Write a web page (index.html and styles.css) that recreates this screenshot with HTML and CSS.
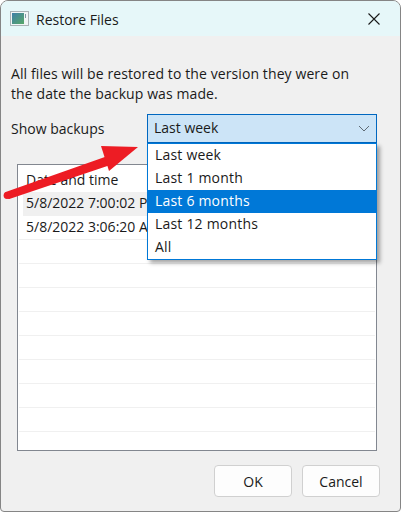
FILE: index.html
```html
<!DOCTYPE html>
<html lang="en">
<head>
  <meta charset="UTF-8" />
  <title>Restore Files</title>
  <link rel="stylesheet" href="styles.css">
</head>
<body>
  <div class="window">
    <div class="titlebar">
      <svg class="app-icon" width="19" height="15" viewBox="0 0 19 15">
        <defs>
          <linearGradient id="iconFill" x1="0" y1="0" x2="1" y2="1">
            <stop offset="0" stop-color="#3f7fa8"/>
            <stop offset="1" stop-color="#58a868"/>
          </linearGradient>
        </defs>
        <rect x="0.5" y="0.5" width="18" height="14" fill="#f2f5f6" stroke="#aab2b6"/>
        <rect x="2" y="2" width="12" height="11" fill="url(#iconFill)"/>
        <rect x="15" y="3" width="1" height="4" fill="#7f98a4"/>
      </svg>
      <span class="title">Restore Files</span>
      <svg class="close" width="12" height="12" viewBox="0 0 12 12">
        <path d="M0.5 0.5L11.5 11.5M11.5 0.5L0.5 11.5" stroke="#1a1a1a" stroke-width="1.1" fill="none"/>
      </svg>
    </div>

    <div class="content">
      <p class="intro">All files will be restored to the version they were on the date the backup was made.</p>

      <div class="filter">
        <label>Show backups</label>
        <div class="combo">
          <span class="combo-value">Last week</span>
          <svg width="12" height="7" viewBox="0 0 12 7">
            <path d="M1 1L6 6L11 1" stroke="#5f6b75" stroke-width="1" fill="none"/>
          </svg>
          <ul class="dropdown">
            <li>Last week</li>
            <li>Last 1 month</li>
            <li class="active">Last 6 months</li>
            <li>Last 12 months</li>
            <li>All</li>
          </ul>
        </div>
      </div>

      <div class="table">
        <div class="thead">Date and time</div>
        <div class="row selected">5/8/2022 7:00:02 PM</div>
        <div class="row">5/8/2022 3:06:20 AM</div>
        <div class="row"></div>
        <div class="row"></div>
        <div class="row"></div>
        <div class="row"></div>
        <div class="row"></div>
        <div class="row"></div>
        <div class="row"></div>
        <div class="row"></div>
      </div>

      <div class="buttons">
        <button>OK</button>
        <button>Cancel</button>
      </div>
    </div>

    <svg class="arrow" width="150" height="70" viewBox="0 0 150 70">
      <polygon points="6,63 108,27 113,33 9,68" fill="#ed1c24" stroke="#ed1c24" stroke-width="2" stroke-linejoin="round"/>
      <circle cx="7" cy="65.5" r="3.4" fill="#ed1c24"/>
      <polygon points="101,16 138,17 109,41" fill="#ed1c24"/>
    </svg>
  </div>
</body>
</html>
```

FILE: styles.css
```css
* {
  box-sizing: border-box;
  margin: 0;
  padding: 0;
}
body {
  background: #ffffff;
  font-family: "Open Sans", sans-serif;
  font-size: 14px;
  color: #1a1a1a;
}
.window {
  position: relative;
  width: 401px;
  height: 512px;
  background: #f0f0f0;
  border: 1px solid #858585;
  border-radius: 8px 8px 4px 4px;
  overflow: hidden;
  display: flex;
  flex-direction: column;
}
.titlebar {
  height: 36px;
  background: #e6f7f9;
  display: flex;
  align-items: center;
  padding: 0 20px 0 9px;
}
.app-icon {
  margin-right: 7px;
}
.title {
  flex: 1;
  font-size: 14px;
  padding-top: 2px;
}
.content {
  flex: 1;
  display: flex;
  flex-direction: column;
  padding: 0 20px 14px 10px;
}
.intro {
  margin-top: 28px;
  line-height: 20px;
  width: 345px;
  letter-spacing: 0.1px;
}
.filter {
  margin-top: 10px;
  display: flex;
  align-items: center;
  justify-content: space-between;
  padding-right: 3px;
}
.combo {
  position: relative;
  width: 230px;
  height: 29px;
  background: #cce4f7;
  border: 1px solid #0067c0;
  display: flex;
  align-items: center;
  justify-content: space-between;
  padding: 0 6px 0 6px;
}
.combo-value {
  margin-top: -3px;
}
.dropdown {
  position: absolute;
  top: 28px;
  left: -1px;
  width: 230px;
  height: 117px;
  background: #ffffff;
  border: 1px solid #0078d7;
  list-style: none;
  box-shadow: 3px 3px 4px rgba(0, 0, 0, 0.35);
  z-index: 2;
}
.dropdown li {
  height: 23px;
  line-height: 21px;
  padding-left: 7px;
  letter-spacing: 0.2px;
}
.dropdown li.active {
  background: #0078d7;
  color: #ffffff;
}
.table {
  margin: 21px 3px 0 6px;
  height: 287px;
  background: #ffffff;
  border: 1px solid #828790;
  overflow: hidden;
}
.thead {
  height: 27px;
  line-height: 30px;
  padding-left: 8px;
}
.row {
  height: 24px;
  line-height: 22px;
  margin: 0 1px;
  padding-left: 7px;
  border-bottom: 1px solid #f0f0f0;
}
.row.selected {
  background: #f0f0f0;
  margin-left: 5px;
  padding-left: 3px;
}
.buttons {
  margin-top: 14px;
  display: flex;
  justify-content: flex-end;
  gap: 10px;
}
button {
  width: 78px;
  height: 32px;
  background: #fdfdfd;
  border: 1px solid #d0d0d0;
  border-radius: 4px;
  font-family: "Open Sans", sans-serif;
  font-size: 14px;
  color: #1a1a1a;
}
.arrow {
  position: absolute;
  left: -1px;
  top: 129px;
  z-index: 3;
}
```
